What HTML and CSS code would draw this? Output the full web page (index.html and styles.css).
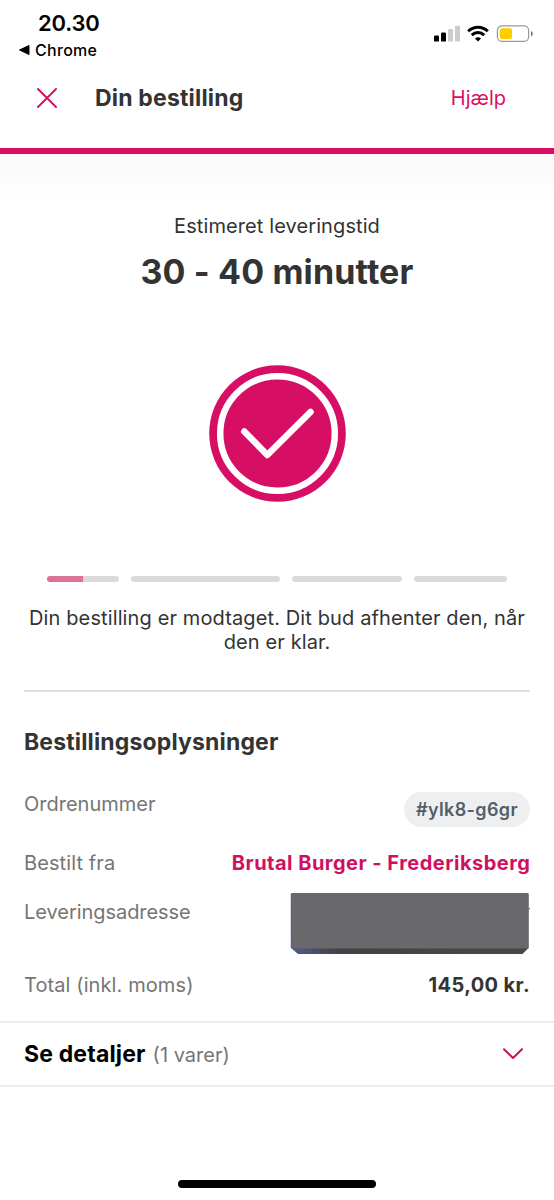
FILE: index.html
```
<!DOCTYPE html>
<html lang="da">
<head>
<meta charset="utf-8">
<title>Din bestilling</title>
<link rel="stylesheet" href="styles.css">
</head>
<body>
<div class="screen">
  <div class="status">
    <div class="status-left">
      <div class="clock">20.30</div>
      <div class="back">
        <svg class="back-arrow" width="12" height="12" viewBox="0 0 12 12"><path d="M1.500 6 11 1.500v9z" fill="#000" stroke="#000" stroke-linejoin="round"/></svg>
        <span class="back-label">Chrome</span>
      </div>
    </div>
    <svg class="status-icons" width="100" height="18" viewBox="0 0 100 18">
      <rect x="0" y="10.6" width="5" height="6" rx="1.2"/>
      <rect x="7" y="7.6" width="5" height="9" rx="1.2"/>
      <rect x="14" y="4" width="5" height="12.600" rx="1.200" fill="#ccc"/>
      <rect x="21" y=".7" width="5" height="15.900" rx="1.200" fill="#ccc"/>
      <g fill="none" stroke="#000" stroke-width="3"><path d="M34.200 6.300a13.800 13.800 0 0 1 19.600 0"/><path d="M37.800 10.100a8.800 8.800 0 0 1 12.400 0"/></g>
      <path d="M44 16.600l-3-3.200q3-2.300 6 0z"/>
      <rect x="63.400" y=".9" width="31.200" height="15.400" rx="4.500" fill="none" stroke="#999" stroke-width="1.200"/>
      <rect x="65.800" y="3.300" width="12.200" height="10.600" rx="2" fill="#fc0"/>
      <path d="M97 6q1.800.8 1.800 2.700T97 11.400z" fill="#777"/>
    </svg>
  </div>
  <header class="header">
    <svg class="close" width="20" height="20" viewBox="0 0 20 20"><path d="M1 1l18 18M19 1 1 19" fill="none" stroke="#d70f64" stroke-width="1.900" stroke-linecap="round"/></svg>
    <h1 class="title">Din bestilling</h1>
    <a class="help">Hjælp</a>
  </header>
  <main class="main">
    <p class="eta-label">Estimeret leveringstid</p>
    <p class="eta">30 - 40 minutter</p>
    <svg class="badge" width="138" height="138" viewBox="0 0 138 138">
      <circle cx="69.500" cy="69.500" r="68.300" fill="#d70f64"/>
      <circle cx="69.500" cy="69.500" r="57.300" fill="none" stroke="#fff" stroke-width="6.500"/>
      <path d="M36.300 67.500 59.300 91 102.500 48" fill="none" stroke="#fff" stroke-width="6.500" stroke-linecap="round" stroke-linejoin="round"/>
    </svg>
    <div class="steps">
      <div class="step step-active"></div><div class="step"></div><div class="step"></div><div class="step"></div>
    </div>
    <p class="message">Din bestilling er modtaget. Dit bud afhenter den, når<br>den er klar.</p>
    <section class="info">
      <h2 class="info-title">Bestillingsoplysninger</h2>
      <div class="row row-order"><span class="k-order">Ordrenummer</span><span class="chip">#ylk8-g6gr</span></div>
      <div class="row row-from"><span class="k-from">Bestilt fra</span><a class="vendor">Brutal Burger - Frederiksberg</a></div>
      <div class="row row-address"><span class="k-address">Leveringsadresse</span>
        <svg class="redacted" width="240" height="63" viewBox="0 0 240 63">
          <defs><linearGradient id="edge"><stop stop-color="#525c8c"/><stop offset=".2" stop-color="#424247"/><stop offset="1" stop-color="#48484a"/></linearGradient></defs>
          <path d="M1 2q0-1 1-1h235q1.500 0 1.500 1.500V56l-6 6H8l-7-6z" fill="url(#edge)"/>
          <path d="M1.500 2q0-1 1-1H237q1.500 0 1.500 1v54.500H2.500z" fill="#69696b"/>
          <path d="M1.200 2v54" stroke="#6066a0" stroke-width=".8"/>
          <path d="M238.500 16h1.500v1.500h-1.500z" fill="#777"/>
        </svg>
      </div>
      <div class="row row-total"><span class="k-total">Total (inkl. moms)</span><strong class="total">145,00 kr.</strong></div>
    </section>
  </main>
  <div class="details">
    <div class="details-text"><strong class="details-title">Se detaljer</strong><span class="count">(1 varer)</span></div>
    <svg class="chevron" width="22" height="14" viewBox="0 0 22 14"><path d="M2 2.200 11 11l9-8.800" fill="none" stroke="#c9115c" stroke-width="2" stroke-linecap="round" stroke-linejoin="round"/></svg>
  </div>
  <div class="home"></div>
</div>
</body>
</html>
```
FILE: styles.css
```
* { box-sizing: border-box; }
body { margin: 0; background: #fff; color: #333; font: 20px/24px Inter, "Liberation Sans", sans-serif; }
h1, h2, p { margin: 0; }
.screen { width: 554px; height: 1200px; display: flex; flex-direction: column; overflow: hidden; white-space: nowrap; }
.status { height: 68px; display: flex; justify-content: space-between; padding: 11px 20px 0 18px; color: #000; }
.clock { margin-left: 20px; font-size: 22px; font-weight: 600; line-height: 25px; letter-spacing: -.2px; }
.back { display: flex; align-items: center; gap: 5px; height: 28px; font-size: 16px; font-weight: 500; letter-spacing: .3px; }
.status-icons { margin-top: 14px; }
.header { height: 86px; display: flex; align-items: center; padding: 0 48px 20px 37px; border-bottom: 6px solid #d70f64; }
.title { margin-left: 38px; font-size: 23px; font-weight: 700; letter-spacing: .18px; }
.help { margin-left: auto; color: #d70f64; }
.main { display: flex; flex-direction: column; padding: 60px 24px 0; text-align: center; background: linear-gradient(#f9f9f9, #fff 50px); }
.eta-label { line-height: 24px; letter-spacing: .1px; }
.eta { margin-top: 12px; font-size: 34px; font-weight: 700; line-height: 44px; letter-spacing: .13px; }
.badge { margin: 70px auto 0; }
.steps { display: grid; grid-template-columns: 72px 149px 110px 93px; gap: 12px; margin: 74px 23px 0; }
.step { height: 6px; border-radius: 3px; background: #dadada; }
.step-active { background: linear-gradient(90deg, #dc7199 50%, #dadada 50%); }
.message { margin: 24px -10px 0; line-height: 24px; letter-spacing: .12px; }
.info { margin-top: 36px; border-top: 2px solid #dfdfdf; text-align: left; }
.info-title { margin-top: 34px; font-size: 23px; font-weight: 700; line-height: 32px; letter-spacing: .15px; }
.row { display: flex; justify-content: space-between; color: #757575; }
.row-order { margin-top: 34px; height: 35px; }
.chip { width: 126px; height: 35px; border-radius: 18px; background: #edeff1; color: #535e66; font-size: 18px; font-weight: 600; line-height: 35px; text-align: center; letter-spacing: .35px; }
.row-from { margin-top: 24px; height: 24px; letter-spacing: .1px; }
.vendor { color: #d0105f; font-weight: 700; letter-spacing: .48px; margin-right: -.4px; }
.row-address { margin-top: 17px; height: 63px; }
.k-address { margin-top: 8px; letter-spacing: -.05px; }
.row-total { margin-top: 18px; height: 24px; letter-spacing: .1px; }
.total { color: #333; font-weight: 700; letter-spacing: .4px; }
.details { height: 66px; margin-top: 24px; padding: 0 30px 0 24px; display: flex; align-items: center; justify-content: space-between; border-top: 2px solid #ececec; border-bottom: 2px solid #ececec; }
.details-text { display: flex; align-items: baseline; gap: 7px; }
.details-title { color: #000; font-size: 23px; font-weight: 700; letter-spacing: .16px; }
.count { color: #757575; }
.home { width: 198px; height: 8px; margin: 93px auto 0; border-radius: 4px; background: #000; }
```
